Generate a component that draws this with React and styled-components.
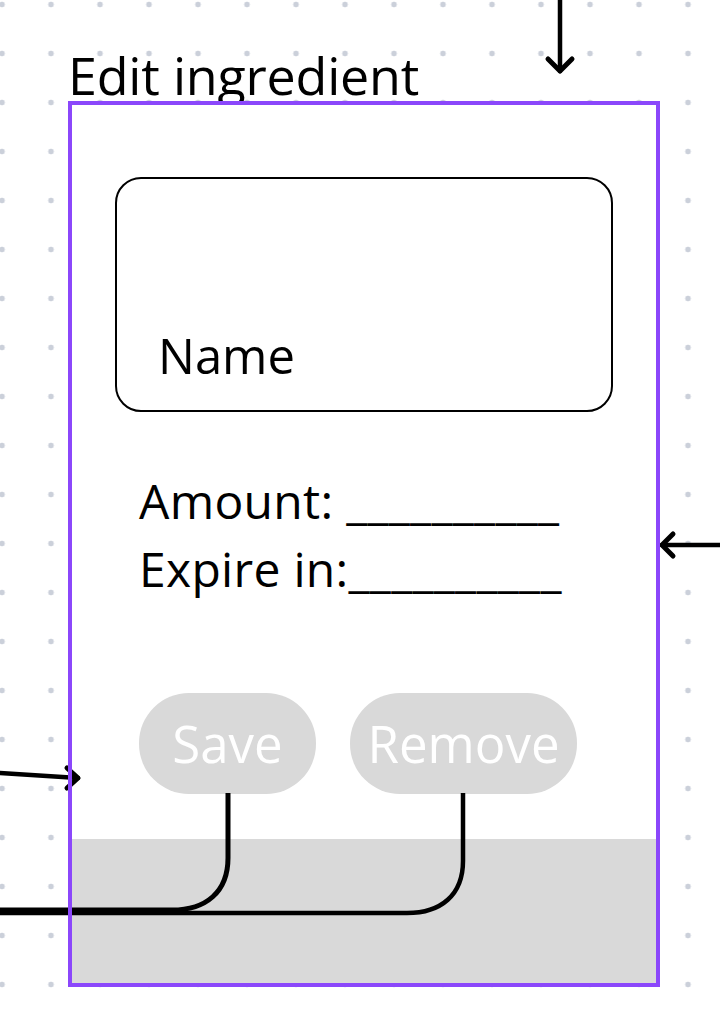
import { createGlobalStyle, styled } from "styled-components";

const GlobalStyle = createGlobalStyle`
  html, body {
    margin: 0;
    padding: 0;
    background: #ffffff;
  }
  body {
    font-family: "Open Sans", "Noto Sans", sans-serif;
    color: #000;
  }
`;

const Page = styled.div`
  position: relative;
  width: 720px;
  height: 1030px;
  overflow: hidden;
  box-sizing: border-box;
  padding: 49px 0 0 68px;
  background-color: #ffffff;
  background-image: radial-gradient(circle, #cbd0da 2.6px, transparent 3.2px);
  background-size: 49px 49px;
  background-position: -22.5px -20px;
`;

const Title = styled.h1`
  margin: 0;
  font-size: 52px;
  line-height: 52px;
  font-weight: 400;
  letter-spacing: -0.2px;
`;

const Frame = styled.section`
  position: relative;
  box-sizing: border-box;
  width: 592px;
  height: 886px;
  padding: 4px;
  background: #ffffff;
  display: flex;
  flex-direction: column;

  &::after {
    content: "";
    position: absolute;
    inset: 0;
    border: 4px solid #8b47fb;
    z-index: 2;
    pointer-events: none;
  }
`;

const NameBox = styled.div`
  box-sizing: border-box;
  width: 498px;
  height: 235px;
  margin: 72px 0 0 43px;
  border: 2px solid #000;
  border-radius: 26px;
  display: flex;
  align-items: flex-end;
  padding: 0 0 31px 41px;
`;

const NameLabel = styled.span`
  font-size: 49px;
  line-height: 48px;
`;

const Fields = styled.div`
  margin: 55px 0 0 67px;
  display: flex;
  flex-direction: column;
`;

const FieldLine = styled.div`
  font-size: 48px;
  line-height: 68px;
  letter-spacing: 0.3px;
  white-space: pre;
`;

const ButtonRow = styled.div`
  display: flex;
  align-items: center;
  gap: 34px;
  margin: 90px 0 0 67px;
`;

const PillButton = styled.button`
  box-sizing: border-box;
  width: ${(p) => p.$w}px;
  height: 101px;
  border: none;
  border-radius: 50px;
  background: #d9d9d9;
  color: #ffffff;
  font-family: "Open Sans", "Noto Sans", sans-serif;
  font-size: 51px;
  line-height: 1;
  padding: 0;
  display: flex;
  align-items: center;
  justify-content: center;
`;

const Footer = styled.div`
  margin-top: auto;
  height: 144px;
  background: #d9d9d9;
`;

const Wires = styled.svg`
  position: absolute;
  left: 0;
  top: 0;
  z-index: 1;
  pointer-events: none;
`;

const Connectors = () => (
  <Wires width="720" height="1030" viewBox="0 0 720 1030">
    <g fill="none" stroke="#000" strokeLinecap="round" strokeLinejoin="round">
      {/* arrow from above */}
      <path d="M560 0 V71" strokeWidth="4.5" />
      <path d="M548 59 L560 71 L572 59" strokeWidth="5" />
      {/* arrow from right */}
      <path d="M720 545 H662" strokeWidth="4.5" />
      <path d="M673 534 L662 545 L673 556" strokeWidth="5" />
      {/* arrow from left */}
      <path d="M0 773 L78 778" strokeWidth="4.5" />
      <path d="M67 768 L78 778 L67 788" strokeWidth="5" />
      {/* button wires */}
      <path d="M228 793 V858 C228 892 206 910 172 910 H0" strokeWidth="5" strokeLinecap="butt" />
      <path d="M463 793 V861 C463 895 441 913 407 913 H0" strokeWidth="4.5" strokeLinecap="butt" />
    </g>
  </Wires>
);

export default function App() {
  return (
    <>
      <GlobalStyle />
      <Page>
        <Title>Edit ingredient</Title>
        <Frame>
          <NameBox>
            <NameLabel>Name</NameLabel>
          </NameBox>
          <Fields>
            <FieldLine>Amount: __________</FieldLine>
            <FieldLine>Expire in:__________</FieldLine>
          </Fields>
          <ButtonRow>
            <PillButton $w={177}>Save</PillButton>
            <PillButton $w={227}>Remove</PillButton>
          </ButtonRow>
          <Footer />
        </Frame>
        <Connectors />
      </Page>
    </>
  );
}
